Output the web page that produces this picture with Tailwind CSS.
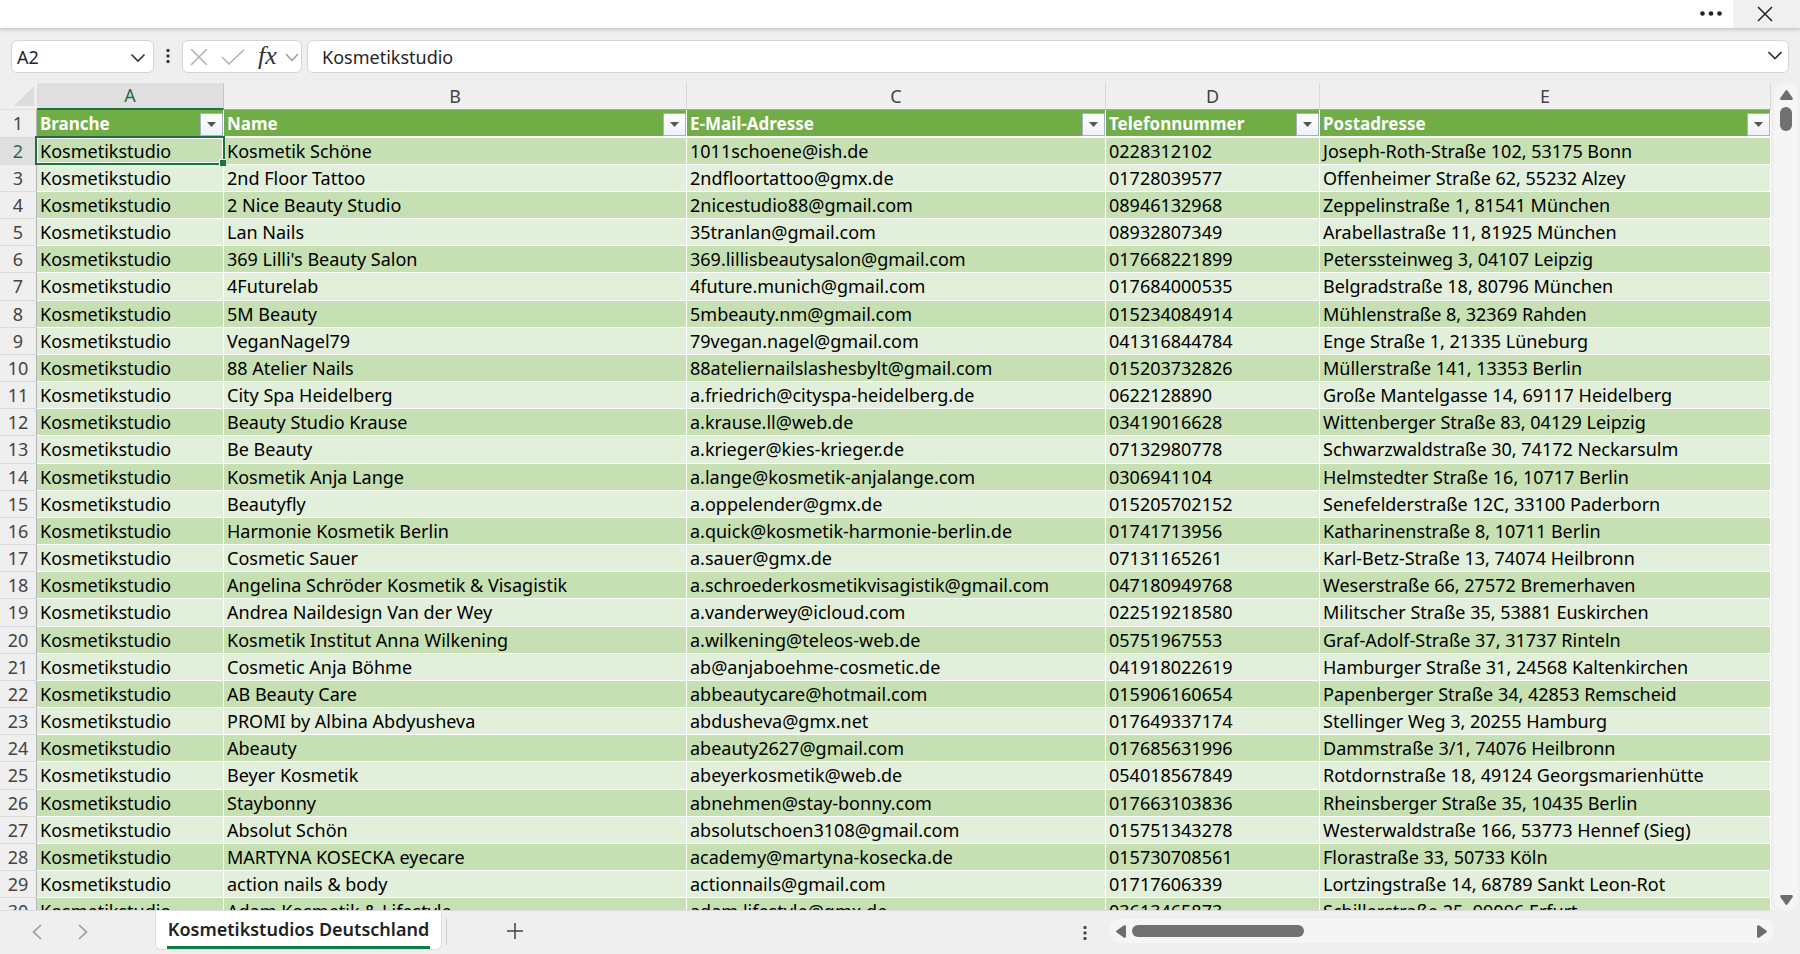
<!DOCTYPE html>
<html lang="de">
<head>
<meta charset="utf-8">
<title>Kosmetikstudios Deutschland</title>
<script src="https://cdn.jsdelivr.net/npm/@tailwindcss/browser@4"></script>
</head>
<body class="flex h-screen flex-col overflow-hidden bg-[#efefef] font-['Noto_Sans',sans-serif] text-lg text-black">

<header class="relative z-10 flex h-[29px] shrink-0 justify-end border-b border-[#cfcfcf] bg-white shadow-[0_1px_4px_rgba(0,0,0,0.16)]">
  <button aria-label="Mehr Optionen" class="flex w-11 items-center justify-center">
    <svg class="h-6 w-6" viewBox="0 0 24 24" fill="#222"><circle cx="3.500" cy="11.500" r="2.300"/><circle cx="12" cy="11.500" r="2.300"/><circle cx="20.500" cy="11.500" r="2.300"/></svg>
  </button>
  <button aria-label="Schließen" class="flex w-[67px] items-center bg-[#f0f0f0] pl-6">
    <svg class="h-4 w-4" viewBox="0 0 16 16" stroke="#222" stroke-width="1.500" fill="none"><path d="M1 1l14 14M15 1L1 15"/></svg>
  </button>
</header>

<div class="flex h-[54px] shrink-0 items-start pr-[11px] pl-[11px] pt-[11px]">
  <div class="flex h-[33px] w-[143px] items-center rounded-md border border-[#d4d4d4] bg-white pr-[7px] pl-[5px]">
    <input aria-label="Namenfeld" value="A2" class="min-w-0 flex-1 bg-transparent text-lg leading-6 text-[#262626] outline-none">
    <button aria-label="Namen auswählen" class="pt-0.5"><svg class="h-3 w-4" viewBox="0 0 16 12" fill="none" stroke="#333" stroke-width="1.600"><path d="M1.500 2.500L8 9 14.500 2.500"/></svg></button>
  </div>
  <svg class="mx-3 mt-2 h-4 w-1" viewBox="0 0 4 16" fill="#333"><rect x=".5" y="1" width="3" height="3" rx=".8"/><rect x=".5" y="6.500" width="3" height="3" rx=".8"/><rect x=".5" y="12" width="3" height="3" rx=".8"/></svg>
  <div class="flex h-[33px] w-[120px] items-center rounded-md border border-[#d4d4d4] bg-white pl-[7px]">
    <button aria-label="Abbrechen"><svg class="h-4 w-[18px]" viewBox="0 0 18 16" fill="none" stroke="#b0b0b0" stroke-width="1.500"><path d="M1 0l16 16M17 0L1 16"/></svg></button>
    <button aria-label="Eingeben" class="ml-[13px]"><svg class="h-4 w-6" viewBox="0 0 24 16" fill="none" stroke="#b0b0b0" stroke-width="1.500"><path d="M1 8l7 7L23 .8"/></svg></button>
    <button aria-label="Funktion einfügen" class="ml-2.5 w-6 pl-[3px] pb-0.5 text-left font-['Liberation_Serif',serif] text-[26px] leading-7 text-[#333] italic">fx</button>
    <button aria-label="Funktionsliste" class="ml-1.5"><svg class="h-3 w-[14px]" viewBox="0 0 14 12" fill="none" stroke="#999" stroke-width="1.400"><path d="M1 3l6 6.500L13 3"/></svg></button>
  </div>
  <div class="ml-[5px] flex h-[33px] flex-1 items-center rounded-md border border-[#d4d4d4] bg-white pr-1.5 pl-[14px]">
    <input aria-label="Bearbeitungsleiste" value="Kosmetikstudio" class="min-w-0 flex-1 bg-transparent text-lg leading-6 text-[#262626] outline-none">
    <button aria-label="Bearbeitungsleiste erweitern" class="pb-1"><svg class="h-3 w-[14px]" viewBox="0 0 14 12" fill="none" stroke="#333" stroke-width="1.600"><path d="M.5 3L7 9.500 13.500 3"/></svg></button>
  </div>
</div>

<main class="flex min-h-0 flex-1">
  <div class="min-w-0 flex-1 overflow-hidden border-b border-[#dcdcdc]">
    <table class="w-full table-fixed border-separate border-spacing-0 whitespace-nowrap">
      <colgroup><col class="w-[37px]"><col class="w-[187px]"><col class="w-[463px]"><col class="w-[419px]"><col class="w-[214px]"><col></colgroup>
      <thead>
        <tr class="h-[27px] text-lg leading-[25px] text-[#444] [&>th]:p-0 [&>th]:font-normal">
          <th class="border-b border-[#dedede]"><svg class="ml-[14px] h-5 w-5" viewBox="0 0 20 20" fill="#dcdcdc"><path d="M20 0v20H0z"/></svg></th>
          <th class="border-r border-b-2 border-r-[#c4c4c4] border-b-[#1a7340] bg-[#dfdfdf] text-[#1e7145]">A</th>
          <th class="border-r border-b border-r-[#d9d9d9] border-b-[#a6a6a6]">B</th>
          <th class="border-r border-b border-r-[#d9d9d9] border-b-[#a6a6a6]">C</th>
          <th class="border-r border-b border-r-[#d9d9d9] border-b-[#a6a6a6]">D</th>
          <th class="border-r border-b border-r-[#d9d9d9] border-b-[#a6a6a6]">E</th>
        </tr>
        <tr id="titles" class="h-7"></tr>
      </thead>
      <tbody id="rows" class="[&>tr]:h-[27px] [&>tr:nth-child(6n)]:h-7 [&>tr:nth-child(odd)>td]:bg-[#c6e0b4] [&>tr:nth-child(even)>td]:bg-[#e2efda]"></tbody>
    </table>
  </div>
  <div class="ml-[3px] flex w-[26px] shrink-0 flex-col pr-0.5">
    <div class="flex flex-1 flex-col items-center rounded-xl bg-[#f5f5f5] pt-[7px] pb-[6px]">
      <button aria-label="Nach oben"><svg class="h-[10px] w-[13px]" viewBox="0 0 13 10" fill="#6e6e6e"><path d="M5.400.7Q6.500-.5 7.600.7L12.700 8Q13.200 10 11.500 10h-10Q-.2 10 .3 8z"/></svg></button>
      <div class="mt-[7px] h-6 w-3 rounded-full bg-[#717171]"></div>
      <button aria-label="Nach unten" class="mt-auto"><svg class="h-[10px] w-[13px]" viewBox="0 0 13 10" fill="#6e6e6e"><path d="M5.400 9.300Q6.500 10.500 7.600 9.300L12.700 2Q13.200 0 11.500 0h-10Q-.2 0 .3 2z"/></svg></button>
    </div>
  </div>
</main>

<footer class="flex h-[43px] shrink-0 items-start pr-[26px]">
  <button aria-label="Vorheriges Blatt" class="mt-[13px] ml-8"><svg class="h-4 w-[10px]" viewBox="0 0 10 16" fill="none" stroke="#999" stroke-width="1.600"><path d="M9 1L1.500 8 9 15"/></svg></button>
  <button aria-label="Nächstes Blatt" class="mt-[13px] ml-9"><svg class="h-4 w-[10px]" viewBox="0 0 10 16" fill="none" stroke="#999" stroke-width="1.600"><path d="M1 1l7.500 7L1 15"/></svg></button>
  <button class="ml-[67px] h-[39px] w-[287px] rounded-b-md border-x border-b border-[#dedede] bg-white px-[11px] pt-1">
    <span class="block border-b-[3px] border-[#107c41] pb-1 text-lg leading-[26px] font-semibold whitespace-nowrap text-[#222]">Kosmetikstudios Deutschland</span>
  </button>
  <div class="mt-2 ml-1 h-[26px] w-px bg-[#cfcfcf]"></div>
  <button aria-label="Neues Blatt" class="mt-3 ml-[60px]"><svg class="h-4 w-4" viewBox="0 0 16 16" fill="none" stroke="#444" stroke-width="1.500"><path d="M8 0v16M0 8h16"/></svg></button>
  <div class="flex-1"></div>
  <svg class="mt-[14px] h-4 w-1" viewBox="0 0 4 16" fill="#444"><rect x=".5" y="1" width="3" height="3" rx=".8"/><rect x=".5" y="6.500" width="3" height="3" rx=".8"/><rect x=".5" y="12" width="3" height="3" rx=".8"/></svg>
  <div class="mt-2 ml-[22px] flex h-6 w-3/8 items-center rounded-full bg-[#f5f5f5] pr-[7px] pl-[7px]">
    <button aria-label="Nach links"><svg class="h-[13px] w-[10px]" viewBox="0 0 10 13" fill="#6e6e6e"><path d="M.7 5.400Q-.5 6.500.7 7.600L8 12.700Q10 13.200 10 11.500v-10Q10-.2 8 .3z"/></svg></button>
    <div class="ml-1.5 h-3 w-[172px] rounded-full bg-[#717171]"></div>
    <button aria-label="Nach rechts" class="ml-auto"><svg class="h-[13px] w-[10px]" viewBox="0 0 10 13" fill="#6e6e6e"><path d="M9.300 5.400Q10.500 6.500 9.300 7.600L2 12.700Q0 13.200 0 11.500v-10Q0-.2 2 .3z"/></svg></button>
  </div>
</footer>

<script>
const titles = ["Branche", "Name", "E-Mail-Adresse", "Telefonnummer", "Postadresse"];
const data = `Kosmetik Schöne|1011schoene@ish.de|0228312102|Joseph-Roth-Straße 102, 53175 Bonn
2nd Floor Tattoo|2ndfloortattoo@gmx.de|01728039577|Offenheimer Straße 62, 55232 Alzey
2 Nice Beauty Studio|2nicestudio88@gmail.com|08946132968|Zeppelinstraße 1, 81541 München
Lan Nails|35tranlan@gmail.com|08932807349|Arabellastraße 11, 81925 München
369 Lilli's Beauty Salon|369.lillisbeautysalon@gmail.com|017668221899|Peterssteinweg 3, 04107 Leipzig
4Futurelab|4future.munich@gmail.com|017684000535|Belgradstraße 18, 80796 München
5M Beauty|5mbeauty.nm@gmail.com|015234084914|Mühlenstraße 8, 32369 Rahden
VeganNagel79|79vegan.nagel@gmail.com|041316844784|Enge Straße 1, 21335 Lüneburg
88 Atelier Nails|88ateliernailslashesbylt@gmail.com|015203732826|Müllerstraße 141, 13353 Berlin
City Spa Heidelberg|a.friedrich@cityspa-heidelberg.de|0622128890|Große Mantelgasse 14, 69117 Heidelberg
Beauty Studio Krause|a.krause.ll@web.de|03419016628|Wittenberger Straße 83, 04129 Leipzig
Be Beauty|a.krieger@kies-krieger.de|07132980778|Schwarzwaldstraße 30, 74172 Neckarsulm
Kosmetik Anja Lange|a.lange@kosmetik-anjalange.com|0306941104|Helmstedter Straße 16, 10717 Berlin
Beautyfly|a.oppelender@gmx.de|015205702152|Senefelderstraße 12C, 33100 Paderborn
Harmonie Kosmetik Berlin|a.quick@kosmetik-harmonie-berlin.de|01741713956|Katharinenstraße 8, 10711 Berlin
Cosmetic Sauer|a.sauer@gmx.de|07131165261|Karl-Betz-Straße 13, 74074 Heilbronn
Angelina Schröder Kosmetik & Visagistik|a.schroederkosmetikvisagistik@gmail.com|047180949768|Weserstraße 66, 27572 Bremerhaven
Andrea Naildesign Van der Wey|a.vanderwey@icloud.com|022519218580|Militscher Straße 35, 53881 Euskirchen
Kosmetik Institut Anna Wilkening|a.wilkening@teleos-web.de|05751967553|Graf-Adolf-Straße 37, 31737 Rinteln
Cosmetic Anja Böhme|ab@anjaboehme-cosmetic.de|041918022619|Hamburger Straße 31, 24568 Kaltenkirchen
AB Beauty Care|abbeautycare@hotmail.com|015906160654|Papenberger Straße 34, 42853 Remscheid
PROMI by Albina Abdyusheva|abdusheva@gmx.net|017649337174|Stellinger Weg 3, 20255 Hamburg
Abeauty|abeauty2627@gmail.com|017685631996|Dammstraße 3/1, 74076 Heilbronn
Beyer Kosmetik|abeyerkosmetik@web.de|054018567849|Rotdornstraße 18, 49124 Georgsmarienhütte
Staybonny|abnehmen@stay-bonny.com|017663103836|Rheinsberger Straße 35, 10435 Berlin
Absolut Schön|absolutschoen3108@gmail.com|015751343278|Westerwaldstraße 166, 53773 Hennef (Sieg)
MARTYNA KOSECKA eyecare|academy@martyna-kosecka.de|015730708561|Florastraße 33, 50733 Köln
action nails & body|actionnails@gmail.com|01717606339|Lortzingstraße 14, 68789 Sankt Leon-Rot
Adam Kosmetik & Lifestyle|adam.lifestyle@gmx.de|03613465873|Schillerstraße 25, 99096 Erfurt`
  .split("\n").map(line => ["Kosmetikstudio", ...line.replace(/&/g, "&amp;").split("|")]);

const rowHead = (n, active) => `<th scope="row" class="border-r border-b border-r-[#b5b5b5] border-b-[#dadada] p-0 text-center text-lg leading-[25px] font-normal ${active ? "bg-[#dfdfdf] text-[#1e7145]" : "text-[#444]"}">${n}</th>`;

document.getElementById("titles").innerHTML = rowHead(1, false) + titles.map(t => `
  <th class="border-r border-b-2 border-white bg-[#70ad47] p-0 pl-[3px] text-left text-[17px] leading-[25px] font-bold text-white">
    <div class="flex items-center justify-between">${t}
      <button aria-label="${t} filtern" class="mt-0.5 flex h-[23px] w-[23px] items-center justify-center border border-[#a9b0c4] bg-linear-to-b from-white to-[#eef1f6]"><svg class="h-[5px] w-[9px]" viewBox="0 0 9 5" fill="#555"><path d="M0 0h9L4.500 5z"/></svg></button>
    </div>
  </th>`).join("");

// Frame and fill handle of the active cell
const selection = `<div class="absolute -top-0.5 -right-0.5 -bottom-px -left-0.5 z-10 border-2 border-[#1e7145]"><div class="h-full border border-white"></div><div class="absolute -right-[3px] -bottom-[3px] h-[7px] w-[7px] border-t border-l border-white bg-[#1e7145]"></div></div>`;
document.getElementById("rows").innerHTML = data.map((row, i) => `<tr>${rowHead(i + 2, i === 0)}${row.map((v, c) => {
  const active = i === 0 && c === 0;
  return `<td class="border-r border-b border-white p-0 pl-[3px] leading-[25px] ${active ? "relative" : ""}">${v}${active ? selection : ""}</td>`;
}).join("")}</tr>`).join("");
</script>
</body>
</html>
